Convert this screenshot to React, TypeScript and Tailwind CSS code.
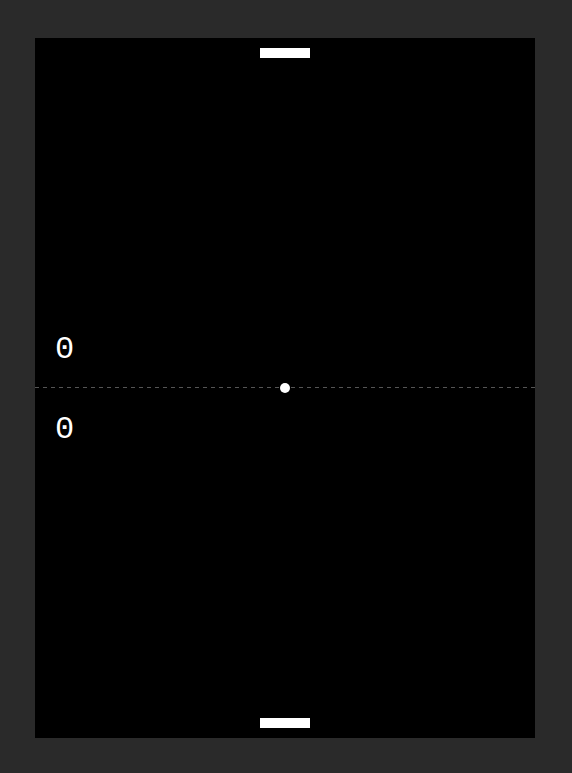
export default function App() {
  return (
    <div className="min-h-screen bg-[#2a2a2a] pl-[35px] pt-[38px]">
      <div className="relative h-[700px] w-[500px] overflow-hidden bg-black">
        {/* top paddle */}
        <div className="absolute left-[225px] top-[10px] h-[10px] w-[50px] bg-white" />
        {/* center line */}
        <svg className="absolute left-0 top-[349px]" width="500" height="1">
          <line x1="0" y1="0.5" x2="500" y2="0.5" stroke="#555" strokeWidth="1" strokeDasharray="4 4" />
        </svg>
        <div className="absolute left-[245px] top-[345px] h-[10px] w-[10px] rounded-full bg-white" />
        {/* scores */}
        <div className="absolute left-[20px] top-[292px] font-['Liberation_Mono',monospace] text-[32px] leading-[40px] text-white">
          0
        </div>
        <div className="absolute left-[20px] top-[372px] font-['Liberation_Mono',monospace] text-[32px] leading-[40px] text-white">
          0
        </div>
        {/* bottom paddle */}
        <div className="absolute left-[225px] top-[680px] h-[10px] w-[50px] bg-white" />
      </div>
    </div>
  );
}
